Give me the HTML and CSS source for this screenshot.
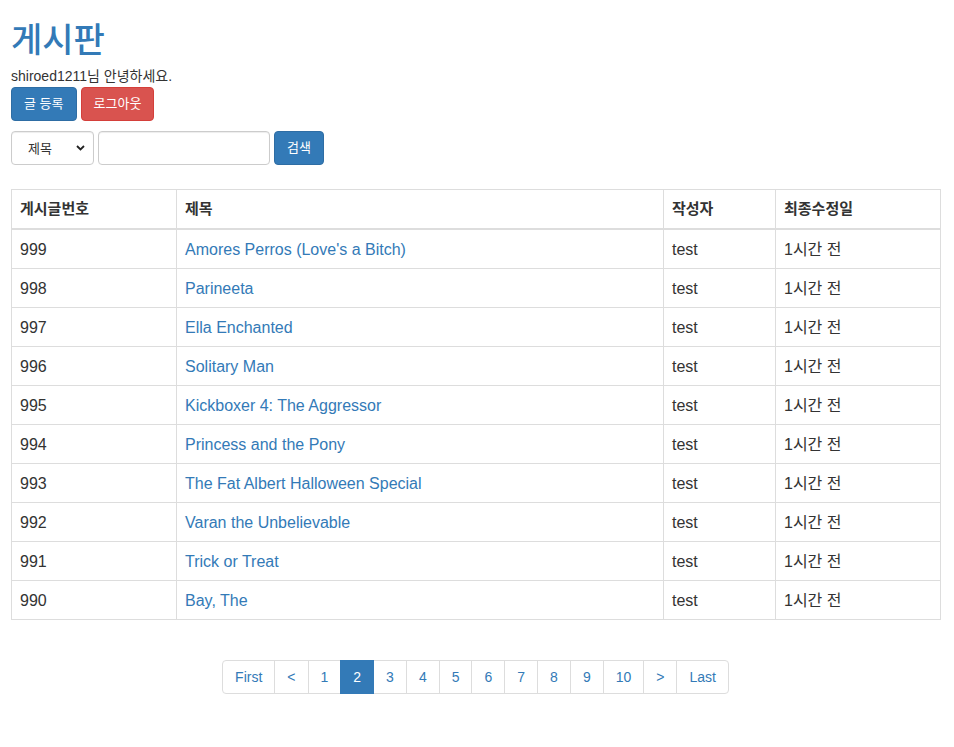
FILE: index.html
```html
<!DOCTYPE html>
<html lang="ko">
<head>
<meta charset="utf-8">
<title>게시판</title>
<link rel="stylesheet" href="styles.css">
</head>
<body>
<div class="page">
  <h1 class="title">게시판</h1>
  <p class="greeting">shiroed1211님 안녕하세요.</p>
  <div class="actions">
    <button class="btn btn-primary">글 등록</button>
    <button class="btn btn-danger">로그아웃</button>
  </div>
  <form class="search">
    <div class="select-wrap">
      <select class="control select">
        <option>제목</option>
      </select>
      <svg class="chev" width="9" height="6" viewBox="0 0 9 6"><path d="M1 1l3.5 3.5L8 1" fill="none" stroke="#222" stroke-width="1.8"/></svg>
    </div>
    <input class="control input" type="text">
    <button class="btn btn-primary" type="button">검색</button>
  </form>
  <table class="board">
    <colgroup>
      <col class="c1"><col class="c2"><col class="c3"><col class="c4">
    </colgroup>
    <thead>
      <tr><th>게시글번호</th><th>제목</th><th>작성자</th><th>최종수정일</th></tr>
    </thead>
    <tbody>
      <tr><td>999</td><td><a href="#">Amores Perros (Love's a Bitch)</a></td><td>test</td><td>1시간 전</td></tr>
      <tr><td>998</td><td><a href="#">Parineeta</a></td><td>test</td><td>1시간 전</td></tr>
      <tr><td>997</td><td><a href="#">Ella Enchanted</a></td><td>test</td><td>1시간 전</td></tr>
      <tr><td>996</td><td><a href="#">Solitary Man</a></td><td>test</td><td>1시간 전</td></tr>
      <tr><td>995</td><td><a href="#">Kickboxer 4: The Aggressor</a></td><td>test</td><td>1시간 전</td></tr>
      <tr><td>994</td><td><a href="#">Princess and the Pony</a></td><td>test</td><td>1시간 전</td></tr>
      <tr><td>993</td><td><a href="#">The Fat Albert Halloween Special</a></td><td>test</td><td>1시간 전</td></tr>
      <tr><td>992</td><td><a href="#">Varan the Unbelievable</a></td><td>test</td><td>1시간 전</td></tr>
      <tr><td>991</td><td><a href="#">Trick or Treat</a></td><td>test</td><td>1시간 전</td></tr>
      <tr><td>990</td><td><a href="#">Bay, The</a></td><td>test</td><td>1시간 전</td></tr>
    </tbody>
  </table>
  <nav class="pager-wrap">
    <ul class="pager">
      <li><a href="#">First</a></li>
      <li><a href="#">&lt;</a></li>
      <li><a href="#">1</a></li>
      <li class="active"><a href="#">2</a></li>
      <li><a href="#">3</a></li>
      <li><a href="#">4</a></li>
      <li><a href="#">5</a></li>
      <li><a href="#">6</a></li>
      <li><a href="#">7</a></li>
      <li><a href="#">8</a></li>
      <li><a href="#">9</a></li>
      <li><a href="#">10</a></li>
      <li><a href="#">&gt;</a></li>
      <li><a href="#">Last</a></li>
    </ul>
  </nav>
</div>
</body>
</html>
```

FILE: styles.css
```css
* { box-sizing: border-box; }
html, body { margin: 0; padding: 0; background: #fff; }
body {
  font-family: "Liberation Sans", "Noto Sans CJK KR", sans-serif;
  font-size: 14px;
  line-height: 1.42857;
  color: #333;
}
.page { padding: 0 14px 40px 11px; }
.title {
  margin: 0;
  padding-top: 14px;
  font-family: "Noto Sans CJK KR", sans-serif;
  font-size: 34px;
  line-height: 48px;
  font-weight: 500;
  color: #337ab7;
}
.greeting { margin: 4px 0 0; line-height: 20px; }
.actions { display: flex; gap: 4px; margin-top: 1px; }
.btn {
  font-family: inherit;
  font-size: 13px;
  line-height: 20px;
  height: 34px;
  padding: 6px 12px;
  border: 1px solid transparent;
  border-radius: 4px;
  color: #fff;
  cursor: pointer;
}
.btn-primary { background: #337ab7; border-color: #2e6da4; }
.btn-danger { background: #d9534f; border-color: #d43f3a; }
.search { display: flex; gap: 4px; margin-top: 10px; margin-bottom: 24px; }
.search .btn { width: 50px; padding: 6px 0; }
.control {
  height: 34px;
  border: 1px solid #ccc;
  border-radius: 4px;
  background: #fff;
  font-family: inherit;
  font-size: 13px;
  color: #555;
  box-shadow: inset 0 1px 1px rgba(0,0,0,.075);
}
.select-wrap { position: relative; }
.select {
  width: 83px;
  padding: 0 0 0 16px;
  appearance: none;
  -webkit-appearance: none;
  color: #333;
}
.chev { position: absolute; right: 9px; top: 14px; pointer-events: none; }
.input { width: 172px; padding: 6px 12px; }
.board {
  width: 929px;
  table-layout: fixed;
  border-collapse: collapse;
  border: 1px solid #ddd;
  font-size: 16px;
}
.c1 { width: 165px; }
.c2 { width: 487px; }
.c3 { width: 112px; }
.c4 { width: 165px; }
.board th, .board td {
  border: 1px solid #ddd;
  padding: 9px 8px 7px;
  line-height: 22px;
  text-align: left;
  vertical-align: top;
}
.board th { font-weight: bold; border-bottom-width: 2px; padding: 8px; font-size: 15px; }
.board a { color: #337ab7; text-decoration: none; }
.pager-wrap { display: flex; justify-content: center; margin-top: 40px; }
.pager { display: flex; list-style: none; margin: 0; padding: 0; }
.pager li a {
  display: block;
  padding: 6px 12px;
  line-height: 20px;
  border: 1px solid #ddd;
  margin-left: -1px;
  color: #337ab7;
  text-decoration: none;
  background: #fff;
}
.pager li:first-child a { margin-left: 0; border-radius: 4px 0 0 4px; }
.pager li:last-child a { border-radius: 0 4px 4px 0; }
.pager li.active a { background: #337ab7; border-color: #337ab7; color: #fff; position: relative; z-index: 1; }
```
